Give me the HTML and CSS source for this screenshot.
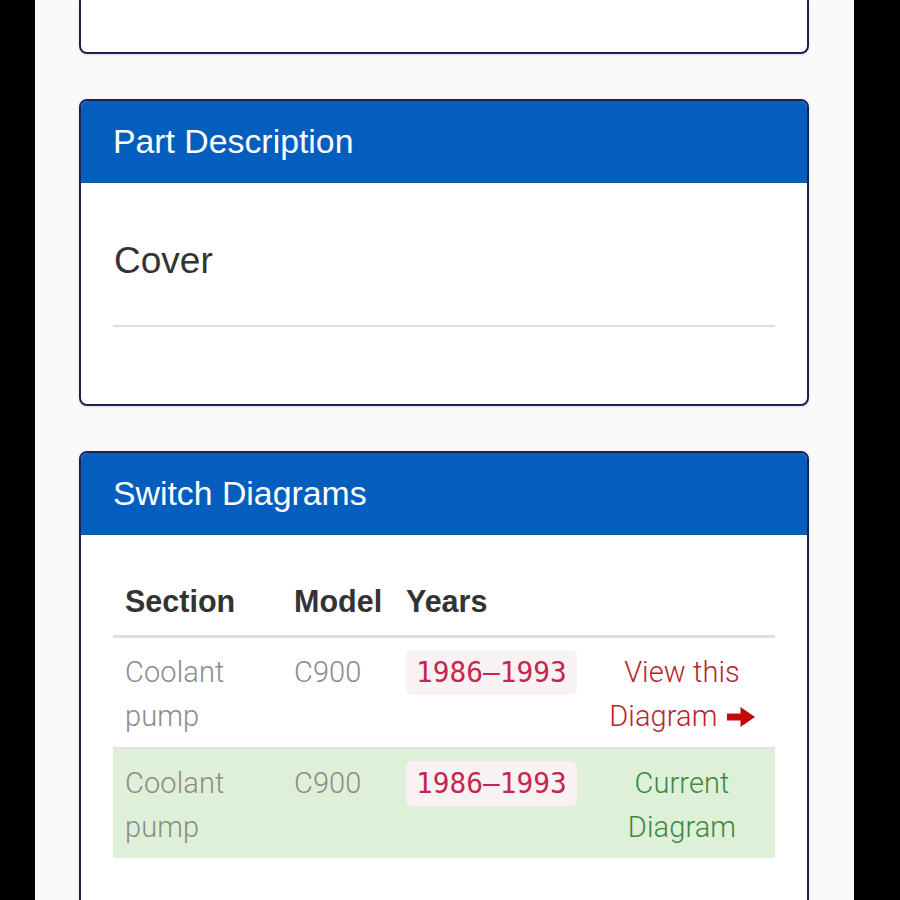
FILE: index.html
```html
<!DOCTYPE html>
<html>
<head>
<meta charset="utf-8">
<link rel="stylesheet" href="styles.css">
</head>
<body>
<div class="page">
  <div class="card card-top"></div>

  <div class="card">
    <div class="card-header">Part Description</div>
    <div class="card-body desc-body">
      <div class="desc">Cover</div>
      <div class="rule"></div>
    </div>
  </div>

  <div class="card">
    <div class="card-header">Switch Diagrams</div>
    <div class="card-body table-body">
      <table class="diagrams">
        <colgroup>
          <col class="c-section">
          <col class="c-model">
          <col class="c-years">
          <col class="c-link">
        </colgroup>
        <thead>
          <tr><th>Section</th><th>Model</th><th>Years</th><th></th></tr>
        </thead>
        <tbody>
          <tr>
            <td>Coolant pump</td>
            <td>C900</td>
            <td><code class="years">1986–1993</code></td>
            <td class="link-cell"><span class="view">View this Diagram <svg class="arrow" viewBox="0 0 28 20" width="28" height="20"><path d="M0 6.5 H13.5 V0 L28 10 L13.5 20 V13.5 H0 Z" fill="#c20a0a"/></svg></span></td>
          </tr>
          <tr class="current">
            <td>Coolant pump</td>
            <td>C900</td>
            <td><code class="years">1986–1993</code></td>
            <td class="link-cell"><span class="cur">Current Diagram</span></td>
          </tr>
        </tbody>
      </table>
    </div>
  </div>
</div>
</body>
</html>
```

FILE: styles.css
```css
html, body {
  margin: 0;
  padding: 0;
  background: #000;
  height: 900px;
  overflow: hidden;
}

.page {
  margin-left: 35px;
  width: 819px;
  height: 900px;
  background: #fafafa;
  padding: 0 45px 0 44px;
  box-sizing: border-box;
  display: flex;
  flex-direction: column;
  gap: 45px;
  font-family: "Liberation Sans", Arial, sans-serif;
}

.card {
  flex: none;
  background: #fff;
  border: 2px solid #1d2150;
  border-radius: 8px;
  overflow: hidden;
  box-shadow: 0 1px 3px rgba(0, 0, 0, 0.12);
}

.card-top {
  height: 52px;
  border-top: none;
  border-radius: 0 0 8px 8px;
}

.card-header {
  background: #045ebd;
  color: #fff;
  height: 82px;
  box-sizing: border-box;
  border-bottom: 1px solid #0b56a6;
  padding: 0 32px;
  display: flex;
  align-items: center;
  font-size: 33.8px;
}

.card-body {
  padding: 0 32px;
}

.desc-body {
  padding-top: 58px;
  padding-bottom: 77px;
}

.desc {
  font-size: 37px;
  line-height: 40px;
  color: #333;
  padding-left: 1px;
}

.rule {
  height: 2px;
  background: #dedede;
  margin-top: 44px;
}

.table-body {
  padding-top: 32px;
  height: 400px;
}

.diagrams {
  width: 100%;
  border-collapse: collapse;
  table-layout: fixed;
}

.c-section { width: 169px; }
.c-model { width: 112px; }
.c-years { width: 195px; }

.diagrams th {
  font-family: "Liberation Sans", Arial, sans-serif;
  font-weight: bold;
  font-size: 30.5px;
  line-height: 44px;
  color: #333;
  text-align: left;
  padding: 12px 12px;
  border-bottom: 3px solid #dddddd;
}

.diagrams td {
  font-family: Roboto, "Liberation Sans", sans-serif;
  font-weight: 300;
  font-size: 29px;
  line-height: 44px;
  color: #8c8c8c;
  padding: 12px 12px 9px;
  vertical-align: top;
  border-top: 2px solid #e2e2e2;
  letter-spacing: 0.1px;
}

.diagrams tbody tr:first-child td {
  border-top: none;
}

.diagrams tr.current td {
  background: #dff0d8;
}

.years {
  display: inline-block;
  font-family: "DejaVu Sans Mono", "Liberation Mono", monospace;
  font-size: 27.8px;
  line-height: 33px;
  color: #c7254e;
  background: #f9f2f4;
  border-radius: 6px;
  padding: 6px 10px;
  margin-top: -1px;
  letter-spacing: 0;
}

.link-cell {
  text-align: center;
}

.view {
  color: #b8262c;
}

.cur {
  color: #3c8a3d;
}

.arrow {
  vertical-align: -1px;
  margin-left: 2px;
}
```
